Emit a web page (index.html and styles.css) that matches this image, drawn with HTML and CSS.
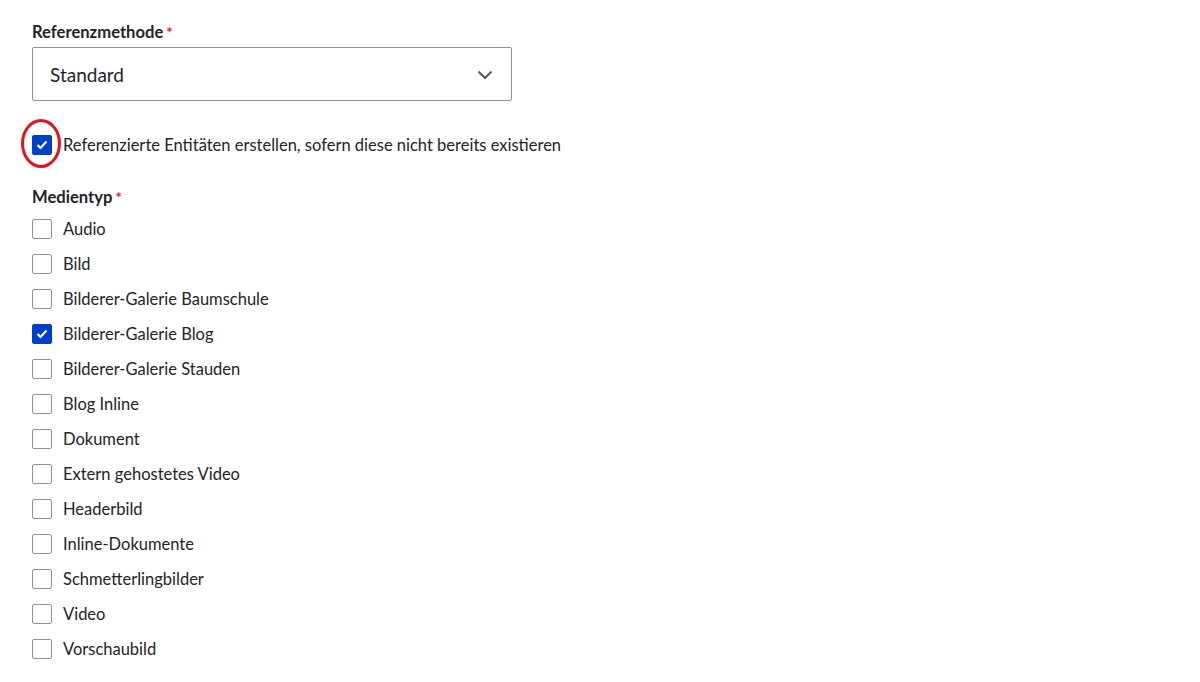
FILE: index.html
```html
<!DOCTYPE html>
<html lang="de">

<head>
    <meta charset="UTF-8">
    <meta name="viewport" content="width=device-width, initial-scale=1.0">
    <title>Referenzmethode</title>
    <link rel="stylesheet" href="styles.css">
</head>

<body>
    <div class="form">
        <div class="form-item">
            <label class="form-label">Referenzmethode<span class="required">*</span></label>
            <div class="select">
                <span>Standard</span>
                <svg class="chevron" width="16" height="10" viewBox="0 0 16 10">
                    <path d="M1.5 1.5 L8 8 L14.5 1.5" fill="none" stroke="#545560" stroke-width="2"/>
                </svg>
            </div>
        </div>

        <div class="form-item autocreate">
            <label class="check">
                <span class="box checked marked">
                    <svg width="12" height="10" viewBox="0 0 12 10"><path d="M1.5 5 L4.5 8 L10.5 1.5" fill="none" stroke="#fff" stroke-width="2.2"/></svg>
                </span>
                Referenzierte Entitäten erstellen, sofern diese nicht bereits existieren
            </label>
        </div>

        <div class="form-item">
            <label class="form-label">Medientyp<span class="required">*</span></label>
            <div class="checkboxes">
                <label class="check"><span class="box"></span>Audio</label>
                <label class="check"><span class="box"></span>Bild</label>
                <label class="check"><span class="box"></span>Bilderer-Galerie Baumschule</label>
                <label class="check"><span class="box checked"><svg width="12" height="10" viewBox="0 0 12 10"><path d="M1.5 5 L4.5 8 L10.5 1.5" fill="none" stroke="#fff" stroke-width="2.2"/></svg></span>Bilderer-Galerie Blog</label>
                <label class="check"><span class="box"></span>Bilderer-Galerie Stauden</label>
                <label class="check"><span class="box"></span>Blog Inline</label>
                <label class="check"><span class="box"></span>Dokument</label>
                <label class="check"><span class="box"></span>Extern gehostetes Video</label>
                <label class="check"><span class="box"></span>Headerbild</label>
                <label class="check"><span class="box"></span>Inline-Dokumente</label>
                <label class="check"><span class="box"></span>Schmetterlingbilder</label>
                <label class="check"><span class="box"></span>Video</label>
                <label class="check"><span class="box"></span>Vorschaubild</label>
            </div>
        </div>
    </div>
</body>

</html>
```

FILE: styles.css
```css
body {
    margin: 0;
    background: #fff;
    color: #232429;
    font-family: Lato, "Open Sans", sans-serif;
    font-size: 16.5px;
}

.form {
    padding: 22px 0 0 32px;
}

.form-label {
    display: block;
    font-weight: bold;
    font-size: 16.6px;
    line-height: 20px;
    margin-bottom: 5px;
}

.required {
    color: #dc2323;
    margin-left: 3px;
    font-size: 15px;
    vertical-align: top;
}

.select {
    height: 52px;
    border: 1px solid #8e929c;
    border-radius: 2px;
    display: flex;
    align-items: center;
    justify-content: space-between;
    padding: 0 18px 0 17px;
    box-sizing: content-box;
    width: 443px;
    font-size: 19px;
}

.chevron {
    margin-top: 1px;
}

.autocreate {
    margin: 34px 0 32px;
}

.check {
    display: flex;
    align-items: center;
    gap: 11px;
    line-height: 20px;
}

.box {
    position: relative;
    width: 18px;
    height: 18px;
    border: 1px solid #8e929c;
    border-radius: 2px;
    flex-shrink: 0;
    display: flex;
    align-items: center;
    justify-content: center;
}

.box.checked {
    background: #003ecc;
    border-color: #003ecc;
}

.marked::after {
    content: "";
    position: absolute;
    left: -12px;
    top: -17px;
    width: 34px;
    height: 43px;
    border: 3px solid #e8101a;
    border-radius: 50%;
}

.checkboxes {
    display: flex;
    flex-direction: column;
    gap: 15px;
    margin-top: 12px;
}
```
